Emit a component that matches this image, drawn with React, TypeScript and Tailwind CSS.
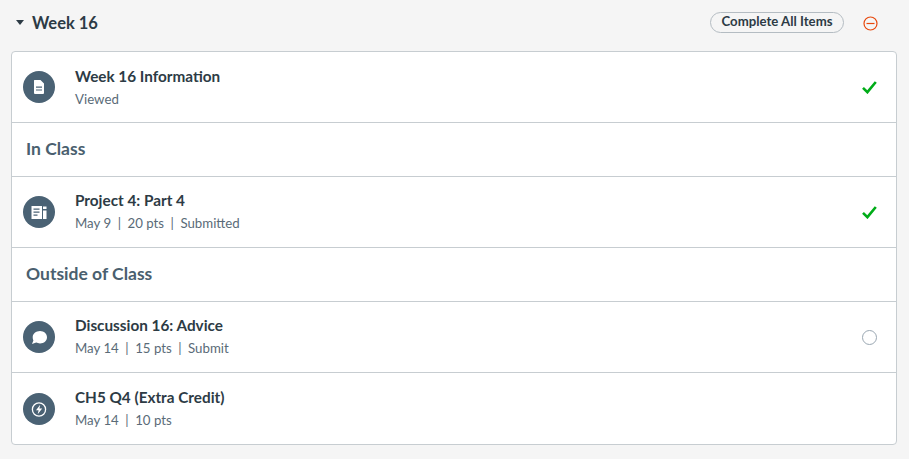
import React from "react";

const Badge = ({ children }: { children: React.ReactNode }) => (
  <div className="w-8 h-8 rounded-full bg-[#4a6274] flex items-center justify-center shrink-0">
    <svg width="16" height="16" viewBox="0 0 16 16" fill="none">{children}</svg>
  </div>
);

const Check = () => (
  <svg width="15" height="13" viewBox="0 0 15 13" fill="none" className="mr-[-1px]">
    <path d="M1 6.8 L5.4 11.2 L13.8 1" stroke="#00ac18" strokeWidth="2.6" />
  </svg>
);

const Sep = () => <span className="mx-[6.5px] text-[#5a6b78]">|</span>;

function Body({ title, meta, up, tight }: { title: string; meta: string[]; up?: boolean; tight?: boolean }) {
  return (
    <div className={`ml-[20px] flex-1 flex flex-col ${up ? "mt-[-1px]" : ""}`}>
      <div className={`text-[15.3px] leading-[22px] font-bold text-[#2d3b45] ${tight ? "" : "mt-[-1px]"}`}>{title}</div>
      <div className={`text-[13.25px] leading-[20px] text-[#5a6b78] ${tight ? "mt-[1.5px]" : "mt-[2.5px]"}`}>
        {meta.map((m, i) => (
          <span key={m}>
            {i > 0 && <Sep />}
            {m}
          </span>
        ))}
      </div>
    </div>
  );
}

function Item({ icon, title, meta, status, up, tight, last }: { icon: React.ReactNode; title: string; meta: string[]; status?: React.ReactNode; up?: boolean; tight?: boolean; last?: boolean }) {
  return (
    <div className={`flex items-center pl-[11px] pr-[20px] h-[71px] ${last ? "" : "border-b border-[#c7cdd1]"}`}>
      <Badge>{icon}</Badge>
      <Body title={title} meta={meta} up={up} tight={tight} />
      {status}
    </div>
  );
}

const Heading = ({ children }: { children: React.ReactNode }) => (
  <div className="h-[54px] flex items-center pl-[14px] border-b border-[#c7cdd1] text-[17.5px] font-bold text-[#4a5f6f]">{children}</div>
);

export default function App() {
  return (
    <div className="w-[909px] h-[459px] bg-[#f5f5f5] px-[11px] font-['Lato',sans-serif] overflow-hidden">
      <div className="h-[51px] flex items-center">
        <svg width="8" height="5" viewBox="0 0 8 5" className="ml-[4.5px] mt-[-6px]">
          <path d="M0 0 H8 L4 5 Z" fill="#2d3b45" />
        </svg>
        <div className="ml-[8.5px] text-[16.5px] font-bold text-[#2d3b45] mt-[-5px]">Week 16</div>
        <div className="flex-1" />
        <div className="mt-[-7px] h-[21px] w-[134px] rounded-full border border-[#b4bcc2] flex items-center justify-center text-[13.2px] font-bold text-[#2d3b45]">
          Complete All Items
        </div>
        <svg width="15" height="15" viewBox="0 0 15 15" fill="none" className="ml-[19px] mr-[20px] mt-[-5px]">
          <circle cx="7.5" cy="7.5" r="6.5" stroke="#e8480c" strokeWidth="1.2" />
          <path d="M3.5 7.5 H11.5" stroke="#e8480c" strokeWidth="1.2" />
        </svg>
      </div>
      <div className="w-[886px] h-[394px] bg-white border border-[#c7cdd1] rounded-[4px] overflow-hidden">
        <Item
          tight
          title="Week 16 Information"
          meta={["Viewed"]}
          status={<Check />}
          icon={
            <path fillRule="evenodd" d="M3.5 1 H9.5 L13 4.5 V14 A1 1 0 0 1 12 15 H4 A1 1 0 0 1 3 14 V1.5 A.5 .5 0 0 1 3.5 1 Z M5 7.6 V8.7 H11 V7.6 Z M5 10.4 V11.5 H11 V10.4 Z" fill="#fff" />
          }
        />
        <Heading>In Class</Heading>
        <Item
          up
          title="Project 4: Part 4"
          meta={["May 9", "20 pts", "Submitted"]}
          status={<Check />}
          icon={
            <>
              <path fillRule="evenodd" d="M0.5 2 H11 V15 H0.5 Z M2.5 4.5 V5.7 H8.5 V4.5 Z M2.5 7.5 V8.7 H8.5 V7.5 Z M2.5 10.5 V11.7 H6.5 V10.5 Z" fill="#fff" />
              <rect x="12" y="6.5" width="3.5" height="8.5" fill="#fff" />
              <rect x="12" y="2.5" width="3.5" height="2.5" fill="#fff" />
            </>
          }
        />
        <Heading>Outside of Class</Heading>
        <Item
          up
          title="Discussion 16: Advice"
          meta={["May 14", "15 pts", "Submit"]}
          status={<div className="w-[15px] h-[15px] rounded-full border border-[#9aa7b2] mr-[-1px]" />}
          icon={
            <path d="M9 2 C13 2 16 4.8 16 8.2 C16 11.8 13 14.4 9 14.4 C7.6 14.4 6.3 14.1 5.2 13.6 L1 15 L2.4 11.4 C1.9 10.4 1.7 9.4 1.7 8.2 C1.7 4.8 5 2 9 2 Z" fill="#fff" />
          }
        />
        <Item
          last
          title="CH5 Q4 (Extra Credit)"
          meta={["May 14", "10 pts"]}
          icon={
            <>
              <circle cx="8" cy="8.5" r="6.6" stroke="#fff" strokeWidth="1.3" />
              <path d="M9.2 3.8 L5 9.2 H7.6 L6.7 13.2 L11.2 7.6 H8.4 Z" fill="#fff" />
            </>
          }
        />
      </div>
    </div>
  );
}
